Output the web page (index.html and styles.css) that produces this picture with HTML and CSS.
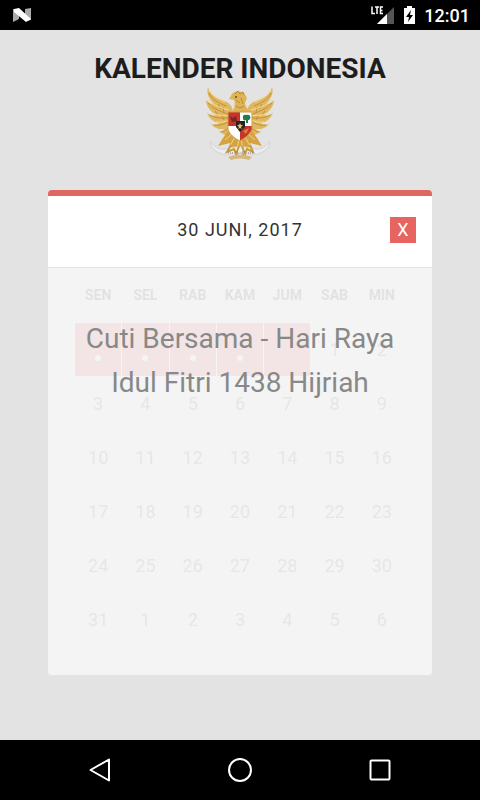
FILE: index.html
```html
<!DOCTYPE html>
<html lang="id">
<head>
    <meta charset="UTF-8">
    <meta name="viewport" content="width=device-width, initial-scale=1.0">
    <title>Kalender Indonesia</title>
    <link rel="stylesheet" href="styles.css">
</head>
<body>
    <div class="status-bar">
        <svg width="20" height="16" viewBox="0 0 20 16">
            <path d="M1 2H7V12L1 15ZM13 2L19 1V13L15 14L13 13Z" fill="#aaa"/>
            <path d="M2 2L7 1L19 12L14 15L2 5Z" fill="#fff"/>
        </svg>
        <div class="status-icons">
            <svg width="24" height="20" viewBox="0 0 24 20" fill="none">
                <path d="M23 2V19H6Z" fill="#555"/>
                <path d="M16 9V19H6Z" fill="#fff"/>
                <path d="M1 1.500V8.500H4 M4 2H8 M6 2V9 M12 2H9.500V8.500H12 M9.500 5.500H11.500" stroke="#fff" stroke-width="1.500"/>
            </svg>
            <svg width="13" height="20" viewBox="0 0 13 20">
                <path d="M1 3H4V1H9V3H12V19H1Z" fill="#fff"/>
                <path d="M8 5L3 12H6L5 17L10 10H7Z" fill="#000"/>
            </svg>
            <span>12:01</span>
        </div>
    </div>

    <main class="page">
        <h1>KALENDER INDONESIA</h1>
        <svg class="emblem" width="70" height="76" viewBox="0 0 70 76">
            <!-- wings -->
            <g id="wing">
                <path d="M3 1C5 8 9 11 17 14C24 16 28 20 28 27L27 50C22 50 17 48 13 45C16 46 18 45 20 43C14 44 9 42 6 38C9 39 12 39 14 37C8 36 4 32 2 27C5 29 8 30 11 29C5 25 1 20 1 14C4 17 7 18 9 18C4 13 1 7 3 1Z" fill="#e0b75f"/>
                <path d="M4 7C7 14 14 17 21 20M3 17C9 24 16 25 22 28M5 29C11 33 18 32 24 32M9 39C15 40 20 38 24 35M16 46C20 45 23 43 25 40M13 18L16 23M18 21L19 27M10 25L13 29M17 29L19 34" stroke="#bd9140" fill="none"/>
                <path d="M4 4C8 11 14 13 20 16M3 14C9 20 17 22 24 24M6 27C13 30 20 29 25 30M11 36C17 37 21 35 25 34" stroke="#f5dc91" fill="none"/>
            </g>
            <use href="#wing" transform="matrix(-1 0 0 1 70 0)"/>
            <!-- neck, head and beak -->
            <path d="M27 27C29 22 31 18 29 14L24 13L27 8C30 4 35 5 39 7L42 12L40 17C40 20 43 22 44 27Z" fill="#dfb458"/>
            <path d="M30 8L33 5L35 8L38 6L39 9M31 14L35 17M31 20L35 22L39 20M36 12L38 18" stroke="#b98a32" fill="none"/>
            <circle cx="31" cy="11" r="1" fill="#684b1c"/>
            <!-- tail and legs -->
            <path d="M25 42L18 52L13 60L25 57L23 67L30 63L31 70L35 67L39 70L40 63L47 67L45 57L57 60L52 52L45 42Z" fill="#d5a342"/>
            <path d="M20 54L28 47M25 60L31 49M32 67L34 50M38 67L36 50M45 60L39 49M50 54L42 47" stroke="#f2d582" fill="none"/>
            <!-- shield -->
            <path d="M23 26H47V44Q43 51 35 55Q26 51 23 44Z" fill="#fff"/>
            <path d="M23 26H35V40H23ZM35 40H47V44Q43 51 35 55Z" fill="#c7342d"/>
            <path d="M23 26H47V44Q43 51 35 55Q26 51 23 44Z" stroke="#c89c48" fill="none"/>
            <path d="M38 32C37 29 40 28 42 29C45 28 47 32 44 34H43V37H41V34C39 35 38 34 38 32Z" fill="#287a48"/>
            <path d="M25 30L28 32L31 30L32 35L27 36Z" fill="#762820"/>
            <path d="M31 35H40V41L35 46L31 41Z" fill="#272321"/>
            <path d="M35 37L36 39H38L36 41L37 43L35 42L33 43L34 41L32 39H34Z" fill="#e7c35b"/>
            <path d="M38 45L44 42L41 48Z" fill="#dc8137"/>
            <!-- ribbon -->
            <path d="M5 55C5 62 12 68 22 69C31 66 39 66 48 69C58 68 65 62 65 55C61 61 55 64 50 63C40 60 30 60 20 63C15 64 9 61 5 55Z" fill="#ececec" stroke="#d3d4d5"/>
            <path d="M26 59L22 66L29 63L31 68L34 60M37 60L40 68L42 63L48 66L45 59" stroke="#c99a3c" stroke-width="2" fill="none"/>
            <path d="M23 71C31 68 39 68 47 71L44 74C38 72 32 72 26 74Z" fill="#d6b782"/>
            <path d="M23 67H28M30 66H34M37 66H41M43 67H48" stroke="#777" stroke-dasharray="1 1"/>
        </svg>

        <section class="card">
            <header class="card-header">
                <h2>30 JUNI, 2017</h2>
                <button class="close" type="button" aria-label="Tutup">X</button>
            </header>
            <div class="card-body">
                <table class="calendar">
                    <thead>
                        <tr><th>SEN</th><th>SEL</th><th>RAB</th><th>KAM</th><th>JUM</th><th>SAB</th><th>MIN</th></tr>
                    </thead>
                    <tbody>
                        <tr><td class="holiday event"></td><td class="holiday event"></td><td class="holiday event"></td><td class="holiday event"></td><td class="holiday"></td><td>1</td><td>2</td></tr>
                        <tr><td>3</td><td>4</td><td>5</td><td>6</td><td>7</td><td>8</td><td>9</td></tr>
                        <tr><td>10</td><td>11</td><td>12</td><td>13</td><td>14</td><td>15</td><td>16</td></tr>
                        <tr><td>17</td><td>18</td><td>19</td><td>20</td><td>21</td><td>22</td><td>23</td></tr>
                        <tr><td>24</td><td>25</td><td>26</td><td>27</td><td>28</td><td>29</td><td>30</td></tr>
                        <tr><td>31</td><td>1</td><td>2</td><td>3</td><td>4</td><td>5</td><td>6</td></tr>
                    </tbody>
                </table>
                <div class="overlay">
                    <p>Cuti Bersama - Hari Raya Idul Fitri 1438 Hijriah</p>
                </div>
            </div>
        </section>
    </main>

    <nav class="nav-bar">
        <button type="button" aria-label="Kembali">
            <svg width="28" height="28" viewBox="0 0 28 28"><path d="M23 3.500V24.500L4.500 14Z"/></svg>
        </button>
        <button type="button" aria-label="Beranda">
            <svg width="28" height="28" viewBox="0 0 28 28"><circle cx="14" cy="14" r="11"/></svg>
        </button>
        <button type="button" aria-label="Aplikasi terbaru">
            <svg width="28" height="28" viewBox="0 0 28 28"><rect x="4.500" y="4.500" width="19" height="19" rx="1"/></svg>
        </button>
    </nav>
</body>
</html>
```
FILE: styles.css
```css
* {
    box-sizing: border-box;
}
body {
    margin: 0;
    min-height: 100vh;
    display: flex;
    flex-direction: column;
    background: #e3e3e3;
    color: #222;
    font-family: Roboto, sans-serif;
}
h1, h2, p {
    margin: 0;
}
button {
    border: none;
    padding: 0;
    font-family: inherit;
    cursor: pointer;
}
.status-bar {
    height: 30px;
    padding: 0 10px 0 12px;
    display: flex;
    align-items: center;
    justify-content: space-between;
    background: #000;
    color: #fff;
}
.status-icons {
    display: flex;
    align-items: center;
    gap: 8px;
    font-size: 18px;
    font-weight: 500;
}
.page {
    flex: 1;
    padding: 22px 10% 24px;
    display: flex;
    flex-direction: column;
    align-items: center;
}
h1 {
    font-size: 28px;
    line-height: 34px;
    font-weight: 700;
    color: #1d1d1d;
}
.card {
    width: 100%;
    margin-top: 28px;
    border-top: 6px solid #e06661;
    border-radius: 4px;
    background: #f4f4f4;
    overflow: hidden;
}
.card-header {
    height: 72px;
    padding: 0 16px 4px;
    display: grid;
    grid-template-columns: 26px 1fr 26px;
    align-items: center;
    background: #fff;
    border-bottom: 1px solid #e4e4e4;
}
.card-header h2 {
    grid-column: 2;
    text-align: center;
    font-size: 18px;
    font-weight: 400;
    letter-spacing: 1px;
    color: #333;
}
.close {
    height: 26px;
    background: #e76460;
    color: #fff;
    font-size: 18px;
}
.card-body {
    position: relative;
    padding: 0 26px 28px;
}
.calendar {
    width: 100%;
    table-layout: fixed;
    border-collapse: collapse;
    text-align: center;
}
.calendar th {
    height: 54px;
    padding: 0;
    font-size: 14px;
    color: #404040;
}
.calendar td {
    position: relative;
    height: 54px;
    padding: 0;
    border: 1px solid #fff;
    font-size: 18px;
    color: #666;
}
.calendar .holiday {
    background: #e66060;
}
.event::after {
    content: "";
    position: absolute;
    bottom: 15px;
    left: 50%;
    width: 6px;
    height: 6px;
    margin-left: -3px;
    border-radius: 50%;
    background: #fff;
}
.overlay {
    position: absolute;
    inset: 0;
    padding: 49px 26px;
    background: rgba(244, 244, 244, 0.9);
    color: #888;
    font-size: 28px;
    line-height: 44px;
    text-align: center;
}
.nav-bar {
    height: 60px;
    padding: 0 30px;
    display: flex;
    align-items: center;
    justify-content: space-around;
    background: #000;
}
.nav-bar button {
    display: flex;
    background: none;
}
.nav-bar svg {
    fill: none;
    stroke: #fff;
    stroke-width: 2;
    stroke-linejoin: round;
}
```
